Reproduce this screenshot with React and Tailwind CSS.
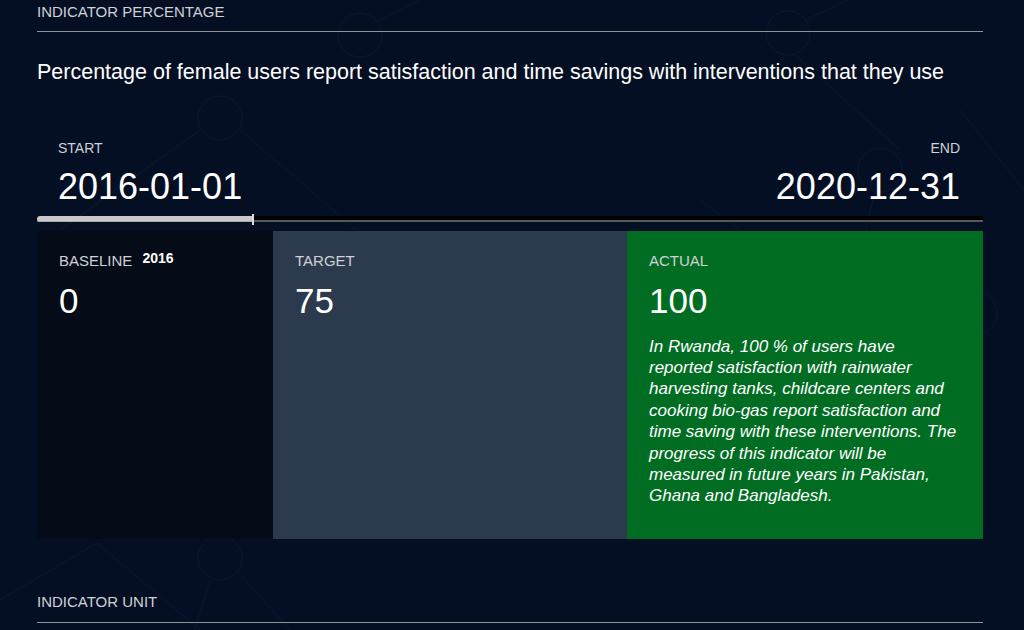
import React from 'react';

const font = { fontFamily: '"Liberation Sans", Arial, sans-serif' };

// faint network pattern behind the page
const Backdrop = () => (
  <svg className="absolute inset-0 w-full h-full pointer-events-none" viewBox="0 0 1024 630" fill="none">
    <g stroke="#0a1830" strokeWidth="1">
      <circle cx="360" cy="35" r="22" />
      <circle cx="788" cy="33" r="22" />
      <circle cx="220" cy="118" r="22" />
      <circle cx="115" cy="312" r="22" />
      <circle cx="838" cy="313" r="22" />
      <circle cx="975" cy="313" r="22" />
      <circle cx="220" cy="558" r="22" />
      <circle cx="880" cy="170" r="22" />
      <line x1="380" y1="20" x2="460" y2="-20" />
      <line x1="805" y1="20" x2="870" y2="-10" />
      <line x1="240" y1="130" x2="380" y2="250" />
      <line x1="200" y1="130" x2="60" y2="230" />
      <line x1="795" y1="55" x2="900" y2="150" />
      <line x1="960" y1="110" x2="1024" y2="190" />
      <line x1="820" y1="290" x2="700" y2="200" />
      <line x1="850" y1="292" x2="875" y2="192" />
      <line x1="97" y1="543" x2="0" y2="600" />
      <line x1="97" y1="543" x2="200" y2="630" />
      <line x1="238" y1="572" x2="290" y2="630" />
      <line x1="210" y1="580" x2="195" y2="630" />
      <line x1="100" y1="330" x2="40" y2="400" />
    </g>
  </svg>
);

const Box = ({ className, children }) => (
  <div className={`flex flex-col px-[22px] pt-[22px] ${className}`}>{children}</div>
);

export default function App() {
  return (
    <div className="relative w-[1024px] h-[630px] overflow-hidden bg-[#040f24] text-white" style={font}>
      <Backdrop />
      <div className="relative pl-[37px] pr-[41px]">
        {/* Header */}
        <div className="pt-[4px] pb-[12px] border-b border-[#8f9398] text-[15px] leading-none text-[#cfd2d6]">
          INDICATOR PERCENTAGE
        </div>

        <h1 className="mt-[30px] text-[21.5px] leading-none">
          Percentage of female users report satisfaction and time savings with interventions that they use
        </h1>

        {/* Dates */}
        <div className="mt-[57px] flex justify-between px-[21px]">
          <div>
            <div className="text-[14px] leading-none text-[#cfd2d6]">START</div>
            <div className="mt-[14px] text-[36px] leading-none">2016-01-01</div>
          </div>
          <div className="text-right pr-[2px]">
            <div className="text-[14px] leading-none text-[#cfd2d6]">END</div>
            <div className="mt-[14px] text-[36px] leading-none">2020-12-31</div>
          </div>
        </div>

        {/* Progress */}
        <div className="mt-[11px] relative h-[6px] bg-black border-b-2 border-[#55585c]">
          <div className="h-[6px] w-[216px] bg-[#c9c9c9] rounded-l-full border-b border-[#a9a9a9]" />
          <div className="absolute left-[215px] -top-[2px] w-[2px] h-[11px] bg-[#dcdcdc]" />
        </div>

        {/* Values */}
        <div className="mt-[9px] flex h-[308px]">
          <Box className="w-[236px] bg-[#050b17]">
            <div className="flex items-start gap-[10px] text-[15px] leading-none">
              <span className="text-[#cfd2d6]">BASELINE</span>
              <span className="relative -top-[2px] text-[14px] font-bold">2016</span>
            </div>
            <div className="mt-[15px] text-[35px] leading-none">0</div>
          </Box>
          <Box className="w-[354px] bg-[#2b3a4d]">
            <div className="text-[15px] leading-none text-[#cfd2d6]">TARGET</div>
            <div className="mt-[15px] text-[35px] leading-none">75</div>
          </Box>
          <Box className="flex-1 bg-[#016d22]">
            <div className="text-[15px] leading-none text-[#cfd2d6]">ACTUAL</div>
            <div className="mt-[15px] text-[35px] leading-none">100</div>
            <p className="mt-[18px] w-[310px] text-[17px] leading-[21.4px] italic">
              In Rwanda, 100 % of users have reported satisfaction with rainwater harvesting tanks, childcare
              centers and cooking bio-gas report satisfaction and time saving with these interventions. The
              progress of this indicator will be measured in future years in Pakistan, Ghana and Bangladesh.
            </p>
          </Box>
        </div>

        {/* Next section */}
        <div className="mt-[55px] pb-[13px] border-b border-[#8f9398] text-[15px] leading-none text-[#cfd2d6]">
          INDICATOR UNIT
        </div>
      </div>
    </div>
  );
}
